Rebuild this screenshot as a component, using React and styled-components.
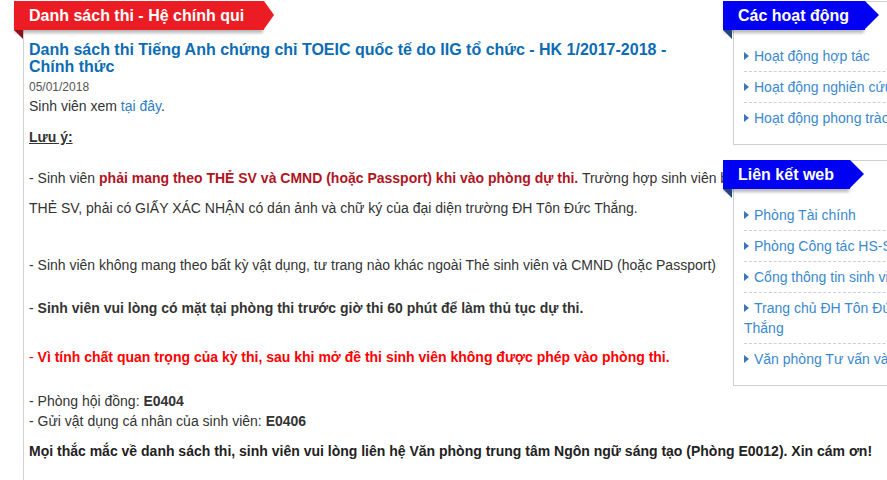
import React from "react";
import styled, { createGlobalStyle } from "styled-components";

const GlobalStyle = createGlobalStyle`
  html, body {
    margin: 0;
    padding: 0;
    background: #fff;
    overflow: hidden;
  }
  body {
    font-family: "Liberation Sans", Arial, sans-serif;
    font-size: 14px;
    color: #333;
  }
`;

const Page = styled.div`
  display: grid;
  grid-template-columns: 723px 223px;
  min-height: 100vh;
  padding-top: 1px;
  box-sizing: border-box;
`;

const Main = styled.main`
  grid-column: 1 / -1;
  grid-row: 1;
  margin-left: 23px;
  border-left: 1px solid #d0d0d0;
  padding-left: 5px;
`;

const Sidebar = styled.aside`
  grid-column: 2;
  grid-row: 1;
  align-self: start;
  z-index: 1;
`;

const Ribbon = styled.div`
  position: relative;
  display: flex;
  width: max-content;
  height: 29px;
  margin: ${(p) => p.$offset};

  &::after {
    content: "";
    position: absolute;
    left: 0;
    top: 100%;
    width: 0;
    height: 0;
    border-top: 9px solid ${(p) => p.$fold};
    border-left: 9px solid transparent;
  }
`;

const RibbonLabel = styled.h2`
  margin: 0;
  padding: 0 ${(p) => p.$pad}px 0 15px;
  background: ${(p) => p.$color};
  color: #fff;
  font-size: 16px;
  font-weight: bold;
  line-height: 29px;
  white-space: nowrap;
  box-shadow: 0 4px 3px -1px rgba(0, 0, 0, 0.28);
`;

const RibbonTip = styled.span`
  width: 0;
  height: 0;
  border-left: ${(p) => p.$tip}px solid ${(p) => p.$color};
  border-top: 14.5px solid transparent;
  border-bottom: 14.5px solid transparent;
`;

const Title = styled.h1`
  max-width: 680px;
  margin: 11px 0 0;
  font-size: 16px;
  line-height: 17px;
  font-weight: bold;
  color: #0b6cb3;
`;

const Date = styled.div`
  margin-top: 5px;
  font-size: 12px;
  line-height: 15px;
  color: #555;
`;

const Line = styled.p`
  margin: ${(p) => p.$gap || 0}px 0 0;
  line-height: ${(p) => p.$lh || 20}px;
  white-space: nowrap;
  color: ${(p) => p.$color || "#333"};
  font-weight: ${(p) => (p.$bold ? "bold" : "normal")};
`;

const Link = styled.a`
  color: #2f7cc4;
  text-decoration: none;
`;

const Note = styled.span`
  font-weight: bold;
  text-decoration: underline;
`;

const Strong = styled.b`
  color: ${(p) => p.$color || "inherit"};
`;

const Box = styled.section`
  margin: ${(p) => p.$gap}px 0 0 10px;
  border: 1px solid #cfcfcf;
  background: #fff;
  padding: 0 10px 11px;
`;

const List = styled.ul`
  list-style: none;
  margin: 11px 0 0;
  padding: 0;
`;

const Item = styled.li`
  padding: 5px 0;
  line-height: 20px;
  border-bottom: 1px dashed #cfcfcf;

  &:last-child {
    border-bottom: none;
  }
`;

const Bullet = styled.span`
  display: inline-block;
  width: 0;
  height: 0;
  margin-right: 5px;
  vertical-align: 1px;
  border-left: 5px solid #3877b9;
  border-top: 4px solid transparent;
  border-bottom: 4px solid transparent;
`;

const ItemLink = styled.a`
  color: #3a88d0;
  text-decoration: none;
`;

function Banner({ color, fold, tip, pad, offset, children }) {
  return (
    <Ribbon $fold={fold} $offset={offset}>
      <RibbonLabel $color={color} $pad={pad}>
        {children}
      </RibbonLabel>
      <RibbonTip $color={color} $tip={tip} />
    </Ribbon>
  );
}

const widgets = [
  {
    title: "Các hoạt động",
    gap: 0,
    links: ["Hoạt động hợp tác", "Hoạt động nghiên cứu", "Hoạt động phong trào"],
  },
  {
    title: "Liên kết web",
    gap: 15,
    links: [
      "Phòng Tài chính",
      "Phòng Công tác HS-SV",
      "Cổng thông tin sinh viên",
      "Trang chủ ĐH Tôn Đức Thắng",
      "Văn phòng Tư vấn và Hỗ trợ",
    ],
  },
];

export default function App() {
  return (
    <>
      <GlobalStyle />
      <Page>
        <Main>
          <Banner color="#ec1c24" fold="#8e0f16" tip={10} pad={20} offset="0 0 0 -15px">
            Danh sách thi - Hệ chính qui
          </Banner>
          <Title>
            Danh sách thi Tiếng Anh chứng chỉ TOEIC quốc tế do IIG tổ chức - HK 1/2017-2018 - Chính thức
          </Title>
          <Date>05/01/2018</Date>
          <Line $gap={1}>
            Sinh viên xem <Link href="#">tại đây</Link>.
          </Line>
          <Line $gap={11}>
            <Note>Lưu ý:</Note>
          </Line>
          <Line $gap={16} $lh={30}>
            - Sinh viên{" "}
            <Strong $color="#b1141e">
              phải mang theo THẺ SV và CMND (hoặc Passport) khi vào phòng dự thi.
            </Strong>{" "}
            Trường hợp sinh viên bị mất
            <br />
            THẺ SV, phải có GIẤY XÁC NHẬN có dán ảnh và chữ ký của đại diện trường ĐH Tôn Đức Thắng.
          </Line>
          <Line $gap={32}>
            - Sinh viên không mang theo bất kỳ vật dụng, tư trang nào khác ngoài Thẻ sinh viên và CMND (hoặc Passport)
          </Line>
          <Line $gap={23}>
            - <Strong>Sinh viên vui lòng có mặt tại phòng thi trước giờ thi 60 phút để làm thủ tục dự thi.</Strong>
          </Line>
          <Line $gap={29} $color="#f00">
            - <Strong>Vì tính chất quan trọng của kỳ thi, sau khi mở đề thi sinh viên không được phép vào phòng thi.</Strong>
          </Line>
          <Line $gap={24}>
            - Phòng hội đồng: <Strong>E0404</Strong>
            <br />- Gửi vật dụng cá nhân của sinh viên: <Strong>E0406</Strong>
          </Line>
          <Line $gap={10} $bold $color="#222">
            Mọi thắc mắc về danh sách thi, sinh viên vui lòng liên hệ Văn phòng trung tâm Ngôn ngữ sáng tạo (Phòng E0012). Xin cám ơn!
          </Line>
        </Main>
        <Sidebar>
          {widgets.map((w) => (
            <Box key={w.title} $gap={w.gap}>
              <Banner color="#0000f2" fold="#22457f" tip={14} pad={16} offset="-1px 0 0 -21px">
                {w.title}
              </Banner>
              <List>
                {w.links.map((l) => (
                  <Item key={l}>
                    <Bullet />
                    <ItemLink href="#">{l}</ItemLink>
                  </Item>
                ))}
              </List>
            </Box>
          ))}
        </Sidebar>
      </Page>
    </>
  );
}
